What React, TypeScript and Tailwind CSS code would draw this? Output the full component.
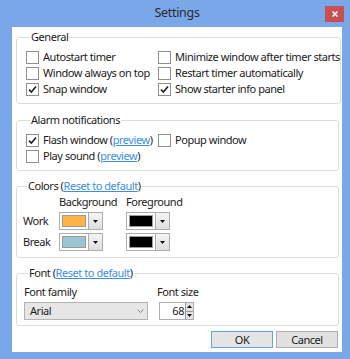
import React from 'react';

const Check = ({ checked }: { checked?: boolean }) => (
  <span className="w-[13px] h-[13px] border border-[#8e8f8f] bg-white flex items-center justify-center shrink-0">
    {checked && (
      <svg width="9" height="9" viewBox="0 0 9 9">
        <path d="M1 4.6 L3.4 7 L8 1.4" fill="none" stroke="#1f1f1f" strokeWidth="1.6" />
      </svg>
    )}
  </span>
);

const Option = ({ checked, children }: { checked?: boolean; children: React.ReactNode }) => (
  <label className="flex items-center gap-[4px] h-[16px] whitespace-nowrap">
    <Check checked={checked} />
    <span>{children}</span>
  </label>
);

const Link = ({ children }: { children: React.ReactNode }) => (
  <span className="text-[#3d8ee3] underline">{children}</span>
);

const Group = ({ title, className, children }: { title: React.ReactNode; className?: string; children: React.ReactNode }) => (
  <fieldset className={`border border-[#dcdcdc] rounded-[3px] ${className ?? ''}`}>
    <legend className="ml-[4px] px-[1px] leading-[16px]">{title}</legend>
    {children}
  </fieldset>
);

const Triangle = ({ up }: { up?: boolean }) => (
  <svg width="5" height="3" viewBox="0 0 5 3">
    <path d={up ? 'M0 3 L2.5 0 L5 3 Z' : 'M0 0 L5 0 L2.5 3 Z'} fill="#111" />
  </svg>
);

const Swatch = ({ color }: { color: string }) => (
  <div className="w-[44px] h-[18px] border border-[#adadad] bg-white flex">
    <div className="flex-1 m-[2px] border border-[#9a9a9a]" style={{ background: color }} />
    <div className="w-[14px] border-l border-[#adadad] bg-gradient-to-b from-[#f4f4f4] to-[#dedede] flex items-center justify-center">
      <Triangle />
    </div>
  </div>
);

export default function App() {
  return (
    <div className="w-[350px] h-[359px] bg-[#7aa7e8] flex flex-col font-['Noto_Sans',sans-serif] text-[11px] tracking-[-0.45px] text-[#1b1b1b] overflow-hidden">
      <div className="h-[27px] relative flex items-center justify-center pl-[4px]">
        <span className="text-[12.5px] tracking-[-0.3px] text-[#2b2b2b]">Settings</span>
        <div className="absolute right-[6px] top-[6px] w-[19px] h-[16px] bg-[#c75050] flex items-center justify-center">
          <svg width="6" height="6" viewBox="0 0 6 6">
            <path d="M0.5 0.5 L5.5 5.5 M5.5 0.5 L0.5 5.5" stroke="#fff" strokeWidth="1.5" />
          </svg>
        </div>
      </div>

      <div className="ml-[12px] w-[330px] h-[325px] bg-white flex flex-col pl-[4px] pr-[3px] pt-[2px]">
        <Group title="General" className="pt-[4px] pb-[6px] pl-[9px]">
          <div className="grid grid-cols-[132px_1fr]">
            <Option>Autostart timer</Option>
            <Option>Minimize window after timer starts</Option>
            <Option>Window always on top</Option>
            <Option>Restart timer automatically</Option>
            <Option checked>Snap window</Option>
            <Option checked>Show starter info panel</Option>
          </div>
        </Group>

        <Group title="Alarm notifications" className="mt-[8px] pt-[4px] pb-[6px] pl-[9px]">
          <div className="grid grid-cols-[132px_1fr]">
            <Option checked>
              Flash window (<Link>preview</Link>)
            </Option>
            <Option>Popup window</Option>
            <Option>
              Play sound (<Link>preview</Link>)
            </Option>
          </div>
        </Group>

        <Group
          title={
            <>
              Colors (<Link>Reset to default</Link>)
            </>
          }
          className="mt-[7px] pb-[6px] pl-[6px]"
        >
          <div className="grid grid-cols-[36px_67px_auto] items-center">
            <span />
            <span className="h-[16px] leading-[16px]">Background</span>
            <span className="h-[16px] leading-[16px]">Foreground</span>
          </div>
          <div className="grid grid-cols-[36px_67px_auto] items-center mt-[2px]">
            <span>Work</span>
            <Swatch color="#ffb347" />
            <Swatch color="#000000" />
          </div>
          <div className="grid grid-cols-[36px_67px_auto] items-center mt-[3px]">
            <span>Break</span>
            <Swatch color="#9ac6d4" />
            <Swatch color="#000000" />
          </div>
        </Group>

        <Group
          title={
            <>
              Font (<Link>Reset to default</Link>)
            </>
          }
          className="mt-[7px] pt-[3px] pb-[5px] pl-[7px]"
        >
          <div className="flex gap-[9px]">
            <div className="flex flex-col w-[124px]">
              <span className="h-[16px] leading-[16px]">Font family</span>
              <div className="mt-[2px] h-[18px] bg-[#e6e6e6] border border-[#b3b3b3] flex items-center justify-between pl-[5px] pr-[3px]">
                <span>Arial</span>
                <svg width="7" height="4" viewBox="0 0 7 4">
                  <path d="M0.5 0.5 L3.5 3.5 L6.5 0.5" fill="none" stroke="#8a8a8a" strokeWidth="1" />
                </svg>
              </div>
            </div>
            <div className="flex flex-col">
              <span className="h-[16px] leading-[16px]">Font size</span>
              <div className="mt-[2px] ml-[2px] w-[35px] h-[18px] border border-[#abadb3] bg-white flex">
                <span className="flex-1 text-right pr-[1px] leading-[16px]">68</span>
                <div className="w-[8px] flex flex-col border-l border-[#9a9a9a]">
                  <div className="flex-1 bg-[#e3e3e3] border-b border-[#9a9a9a] flex items-center justify-center">
                    <Triangle up />
                  </div>
                  <div className="flex-1 bg-[#e3e3e3] flex items-center justify-center">
                    <Triangle />
                  </div>
                </div>
              </div>
            </div>
          </div>
        </Group>

        <div className="mt-[5px] flex justify-end gap-[3px] pr-[1px]">
          <button className="w-[62px] h-[17px] border border-[#5ea5ea] bg-[#e5e5e5] leading-[15px]">OK</button>
          <button className="w-[62px] h-[17px] border border-[#adadad] bg-[#e1e1e1] leading-[15px]">Cancel</button>
        </div>
      </div>
    </div>
  );
}
